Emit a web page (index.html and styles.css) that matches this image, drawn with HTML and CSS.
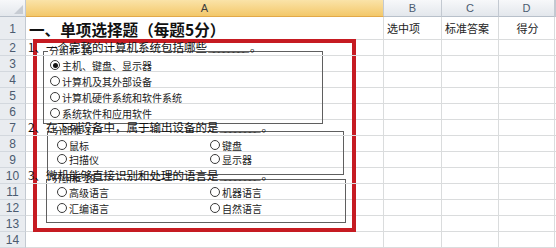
FILE: index.html
```
<!DOCTYPE html>
<html lang="zh-CN">
<head>
    <meta charset="UTF-8">
    <title>单项选择题</title>
    <link rel="stylesheet" href="styles.css">
</head>
<body>
    <div class="sheet">
        <div class="row head">
            <div class="corner"></div>
            <div class="col sel">A</div>
            <div class="col">B</div>
            <div class="col">C</div>
            <div class="col">D</div>
            <div class="col"></div>
        </div>
        <div class="row r1">
            <div class="num">1</div>
            <div class="cell title">一、单项选择题（每题5分）</div>
            <div class="cell pad">选中项</div>
            <div class="cell pad">标准答案</div>
            <div class="cell mid">得分</div>
            <div class="cell"></div>
        </div>
        <div class="row">
            <div class="num">2</div>
            <div class="cell q">1、一个完整的计算机系统包括哪些<span class="blank">________</span>。</div>
            <div class="cell"></div><div class="cell"></div><div class="cell"></div><div class="cell"></div>
        </div>
        <div class="row"><div class="num">3</div><div class="cell"></div><div class="cell"></div><div class="cell"></div><div class="cell"></div><div class="cell"></div></div>
        <div class="row"><div class="num">4</div><div class="cell"></div><div class="cell"></div><div class="cell"></div><div class="cell"></div><div class="cell"></div></div>
        <div class="row"><div class="num">5</div><div class="cell"></div><div class="cell"></div><div class="cell"></div><div class="cell"></div><div class="cell"></div></div>
        <div class="row"><div class="num">6</div><div class="cell"></div><div class="cell"></div><div class="cell"></div><div class="cell"></div><div class="cell"></div></div>
        <div class="row">
            <div class="num">7</div>
            <div class="cell q">2、在下列设备中，属于输出设备的是<span class="blank">________</span>。</div>
            <div class="cell"></div><div class="cell"></div><div class="cell"></div><div class="cell"></div>
        </div>
        <div class="row"><div class="num">8</div><div class="cell"></div><div class="cell"></div><div class="cell"></div><div class="cell"></div><div class="cell"></div></div>
        <div class="row"><div class="num">9</div><div class="cell"></div><div class="cell"></div><div class="cell"></div><div class="cell"></div><div class="cell"></div></div>
        <div class="row">
            <div class="num">10</div>
            <div class="cell q">3、微机能够直接识别和处理的语言是<span class="blank">________</span>。</div>
            <div class="cell"></div><div class="cell"></div><div class="cell"></div><div class="cell"></div>
        </div>
        <div class="row"><div class="num">11</div><div class="cell"></div><div class="cell"></div><div class="cell"></div><div class="cell"></div><div class="cell"></div></div>
        <div class="row"><div class="num">12</div><div class="cell"></div><div class="cell"></div><div class="cell"></div><div class="cell"></div><div class="cell"></div></div>
        <div class="row"><div class="num">13</div><div class="cell"></div><div class="cell"></div><div class="cell"></div><div class="cell"></div><div class="cell"></div></div>
        <div class="row"><div class="num">14</div><div class="cell"></div><div class="cell"></div><div class="cell"></div><div class="cell"></div><div class="cell"></div></div>

        <fieldset class="group g1">
            <legend>分组框 16</legend>
            <div class="opts">
                <div class="opt"><span class="radio on"></span>主机、键盘、显示器</div>
                <div class="opt"><span class="radio"></span>计算机及其外部设备</div>
                <div class="opt"><span class="radio"></span>计算机硬件系统和软件系统</div>
                <div class="opt"><span class="radio"></span>系统软件和应用软件</div>
            </div>
        </fieldset>

        <fieldset class="group g2">
            <legend>分组框 17</legend>
            <div class="opts two">
                <div class="opt"><span class="radio"></span>鼠标</div>
                <div class="opt"><span class="radio"></span>键盘</div>
                <div class="opt"><span class="radio"></span>扫描仪</div>
                <div class="opt"><span class="radio"></span>显示器</div>
            </div>
        </fieldset>

        <fieldset class="group g3">
            <legend>分组框 18</legend>
            <div class="opts two">
                <div class="opt"><span class="radio"></span>高级语言</div>
                <div class="opt"><span class="radio"></span>机器语言</div>
                <div class="opt"><span class="radio"></span>汇编语言</div>
                <div class="opt"><span class="radio"></span>自然语言</div>
            </div>
        </fieldset>

        <div class="frame"></div>
    </div>
</body>
</html>
```

FILE: styles.css
```
* {
    box-sizing: border-box;
}
body {
    margin: 0;
    background-color: #fff;
    font-family: "Noto Sans CJK SC", sans-serif;
    color: #111;
}
.sheet {
    position: relative;
    width: 556px;
    height: 248px;
    overflow: hidden;
}
.row {
    display: grid;
    grid-template-columns: 26px 358px 58px 57px 56px 1px;
    height: 16px;
}
.row.head {
    height: 17px;
}
.row.r1 {
    height: 23px;
}
.corner, .col, .num {
    display: flex;
    align-items: center;
    justify-content: center;
    font-family: "Liberation Sans", sans-serif;
    font-size: 11px;
    color: #4b5b70;
    background: linear-gradient(#f7f8fa, #e3e7ec);
    border-right: 1px solid #c3c9d1;
    border-bottom: 1px solid #b8c0ca;
}
.corner {
    position: relative;
}
.corner::after {
    content: "";
    position: absolute;
    right: 2px;
    bottom: 2px;
    border-left: 9px solid transparent;
    border-bottom: 9px solid #c7ccd3;
}
.col.sel {
    background: linear-gradient(#fae3a8, #f3c86a);
    border-bottom-color: #e2a949;
    color: #3d3d3d;
}
.num {
    background: #e9ecf0;
    border-bottom-color: #d3d8de;
    padding-top: 1px;
    font-size: 12px;
}
.cell {
    display: flex;
    align-items: center;
    border-right: 1px solid #dadcdd;
    border-bottom: 1px solid #dadcdd;
    font-size: 11.5px;
    line-height: 15px;
    white-space: nowrap;
    padding-left: 2px;
}
.cell.title {
    font-size: 15.6px;
    font-weight: bold;
    padding-left: 3px;
    padding-top: 2px;
}
.cell.pad {
    padding-left: 3px;
    color: #222;
    font-size: 11px;
}
.cell.mid {
    justify-content: center;
    color: #222;
    font-size: 11px;
}
.cell.q {
    overflow: visible;
    position: relative;
    z-index: 1;
}
.blank {
    position: relative;
    top: 1px;
    font-family: "Liberation Mono", monospace;
    font-weight: bold;
    letter-spacing: -2px;
    margin: 0 3px 0 1px;
}
.group {
    position: absolute;
    margin: 0;
    padding: 0;
    min-width: 0;
    border: 1px solid #5f5f5f;
    font-size: 10px;
    color: #222;
}
.group legend {
    padding: 0 1px;
    margin-left: 4px;
    font-size: 10px;
    line-height: 10px;
}
.g1 {
    left: 43px;
    top: 46px;
    width: 280px;
    height: 78px;
}
.g2 {
    left: 47px;
    top: 126px;
    width: 297px;
    height: 49px;
}
.g3 {
    left: 46px;
    top: 174px;
    width: 300px;
    height: 49px;
}
.opts {
    display: grid;
    grid-auto-rows: 16px;
}
.g1 .opts {
    padding: 1px 0 0 6px;
}
.opts.two {
    grid-template-columns: 153px 1fr;
}
.g2 .opts {
    padding: 2px 0 0 9px;
    grid-auto-rows: 14px;
}
.g3 .opts {
    padding: 0 0 0 10px;
}
.opt {
    display: flex;
    align-items: center;
    gap: 2px;
    white-space: nowrap;
}
.radio {
    flex: none;
    display: flex;
    align-items: center;
    justify-content: center;
    width: 10px;
    height: 10px;
    border: 1px solid #3a3a3a;
    border-radius: 50%;
    background: #fff;
}
.radio.on::after {
    content: "";
    width: 5px;
    height: 5px;
    border-radius: 50%;
    background: #111;
}
.frame {
    position: absolute;
    left: 33px;
    top: 39px;
    width: 323px;
    height: 193px;
    border: 4px solid #c61b22;
}
```
